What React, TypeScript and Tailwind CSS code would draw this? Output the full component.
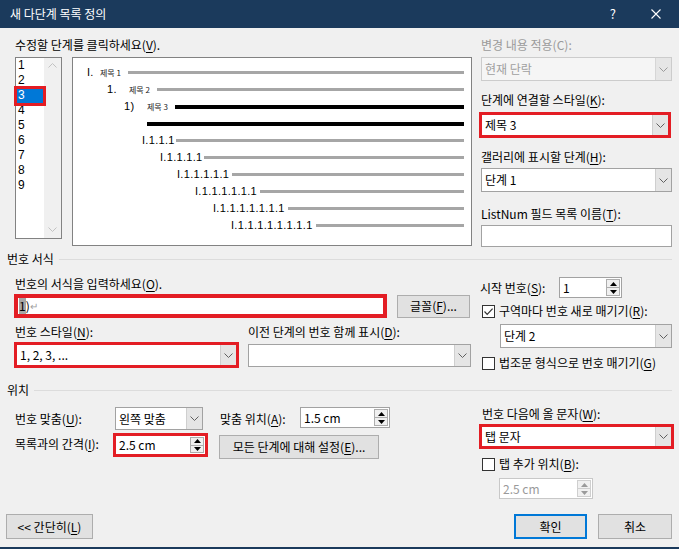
import type { ReactNode } from 'react';

const RED = 'border-[#e31d24]';

function U({ children }: { children: ReactNode }) {
  return <span className="underline underline-offset-[2px]">{children}</span>;
}

function Label({ children, className = '' }: { children: ReactNode; className?: string }) {
  return <div className={`text-[12px] leading-[16px] whitespace-nowrap ${className}`}>{children}</div>;
}

function Chevron({ up = false, color = '#606060' }: { up?: boolean; color?: string }) {
  return (
    <svg width="9" height="5" viewBox="0 0 9 5">
      <path d={up ? 'M0.5 4.5 L4.5 0.5 L8.5 4.5' : 'M0.5 0.5 L4.5 4.5 L8.5 0.5'} fill="none" stroke={color} strokeWidth="1" />
    </svg>
  );
}

function Tri({ up = false, color = '#000' }: { up?: boolean; color?: string }) {
  return (
    <svg width="7" height="4" viewBox="0 0 7 4">
      <path d={up ? 'M0 4 L3.5 0 L7 4 Z' : 'M0 0 L3.5 4 L7 0 Z'} fill={color} />
    </svg>
  );
}

interface FieldProps {
  value?: ReactNode;
  className?: string;
  red?: boolean;
  disabled?: boolean;
}

function Combo({ value, className = '', red = false, disabled = false }: FieldProps) {
  const border = red ? `border-[3px] ${RED}` : disabled ? 'border border-[#cccccc]' : 'border border-[#a2a2a2]';
  return (
    <div className={`flex items-stretch ${border} ${disabled ? 'bg-[#f5f5f5]' : 'bg-white'} ${className}`}>
      <div className={`flex-1 flex items-center pl-[3px] text-[12px] leading-[16px] whitespace-nowrap ${disabled ? 'text-[#a0a0a0]' : 'text-black'}`}>
        {value}
      </div>
      <div className={`w-[16px] flex items-center justify-center border-l ${disabled ? 'bg-[#e6e6e6] border-[#d6d6d6]' : 'bg-[#e5e5e5] border-[#cfcfcf]'}`}>
        <Chevron color={disabled ? '#9a9a9a' : '#606060'} />
      </div>
    </div>
  );
}

function Spin({ value, className = '', red = false, disabled = false }: FieldProps) {
  const border = red ? `border-[3px] ${RED}` : disabled ? 'border border-[#c8c8c8]' : 'border border-[#a2a2a2]';
  const tri = disabled ? '#9a9a9a' : '#000';
  return (
    <div className={`flex items-stretch bg-white ${border} ${className}`}>
      <div className={`flex-1 flex items-center pl-[3px] text-[12px] leading-[16px] whitespace-nowrap ${disabled ? 'text-[#9a9a9a]' : 'text-black'}`}>
        {value}
      </div>
      <div className="w-[15px] flex flex-col py-[1px] pr-[1px]">
        <div className={`flex-1 flex items-center justify-center bg-[#f0f0f0] border ${disabled ? 'border-[#cfcfcf]' : 'border-[#adadad]'}`}>
          <Tri up color={tri} />
        </div>
        <div className={`flex-1 flex items-center justify-center bg-[#f0f0f0] border border-t-0 ${disabled ? 'border-[#cfcfcf]' : 'border-[#adadad]'}`}>
          <Tri color={tri} />
        </div>
      </div>
    </div>
  );
}

function Check({ checked = false }: { checked?: boolean }) {
  return (
    <div className="w-[13px] h-[13px] border border-[#333333] bg-white flex items-center justify-center shrink-0">
      {checked && (
        <svg width="11" height="11" viewBox="0 0 11 11">
          <path d="M1.5 5.5 L4.2 8.3 L9.6 2.6" fill="none" stroke="#333" strokeWidth="1.2" />
        </svg>
      )}
    </div>
  );
}

function Btn({ children, className = '', primary = false }: { children: ReactNode; className?: string; primary?: boolean }) {
  return (
    <div
      className={`flex items-center justify-center bg-[#e1e1e1] text-[12px] leading-[16px] whitespace-nowrap ${
        primary ? 'border-2 border-[#0078d7]' : 'border border-[#adadad]'
      } ${className}`}
    >
      {children}
    </div>
  );
}

function Section({ title, className = '' }: { title: string; className?: string }) {
  return (
    <div className={`flex items-center mx-[7px] ${className}`}>
      <span className="text-[12px] leading-[16px]">{title}</span>
      <div className="flex-1 h-px bg-[#dcdcdc] ml-[5px]" />
    </div>
  );
}

function LevelList() {
  return (
    <div className="relative w-[47px] h-[182px] border border-[#828282] bg-white flex">
      <div className="flex-1 font-['Liberation_Sans',sans-serif]">
        {[1, 2, 3, 4, 5, 6, 7, 8, 9].map((n) => (
          <div
            key={n}
            className={`h-[15px] leading-[15px] text-[12px] ${n === 3 ? 'bg-[#0078d7] text-white mx-[1px] pl-[1px]' : 'pl-[2px]'}`}
          >
            {n}
          </div>
        ))}
      </div>
      <div className="w-[17px] bg-[#f0f0f0] flex flex-col justify-between items-center pt-[5px] pb-[6px]">
        <Chevron up color="#c2c2c2" />
        <Chevron color="#c2c2c2" />
      </div>
      <div className={`absolute left-[-2px] top-[28px] w-[32px] h-[20px] border-[3px] ${RED}`} />
    </div>
  );
}

const NUM = "font-['Liberation_Sans',sans-serif] text-[11px] leading-[17px] tracking-[0.3px] whitespace-nowrap text-black";
const TITLE = 'text-[8px] leading-[17px] whitespace-nowrap text-[#222]';
const GRAY_LINE = 'flex-1 h-[3px] bg-[#a6a6a6]';
const BLACK_LINE = 'flex-1 h-[4px] bg-black';

function Preview() {
  return (
    <div className="ml-[10px] w-[400px] h-[189px] border border-[#828282] bg-white pt-[6px] pr-[7px]">
      <div className="h-[17px] flex items-center pl-[14px]">
        <span className={`${NUM} w-[13px]`}>I.</span>
        <span className={`${TITLE} w-[28px]`}>제목 1</span>
        <div className={GRAY_LINE} />
      </div>
      <div className="h-[17px] flex items-center pl-[34px]">
        <span className={`${NUM} w-[22px]`}>1.</span>
        <span className={`${TITLE} w-[28px]`}>제목 2</span>
        <div className={GRAY_LINE} />
      </div>
      <div className="h-[17px] flex items-center pl-[51px]">
        <span className={`${NUM} w-[23px]`}>1)</span>
        <span className={`${TITLE} w-[28px]`}>제목 3</span>
        <div className={BLACK_LINE} />
      </div>
      <div className="h-[17px] flex items-center pl-[74px]">
        <div className={BLACK_LINE} />
      </div>
      <div className="h-[17px] flex items-center pl-[69px]">
        <span className={`${NUM} w-[34px]`}>I.1.1.1</span>
        <div className={GRAY_LINE} />
      </div>
      <div className="h-[17px] flex items-center pl-[87px]">
        <span className={`${NUM} w-[44px]`}>I.1.1.1.1</span>
        <div className={GRAY_LINE} />
      </div>
      <div className="h-[17px] flex items-center pl-[104px]">
        <span className={`${NUM} w-[55px]`}>I.1.1.1.1.1</span>
        <div className={GRAY_LINE} />
      </div>
      <div className="h-[17px] flex items-center pl-[122px]">
        <span className={`${NUM} w-[65px]`}>I.1.1.1.1.1.1</span>
        <div className={GRAY_LINE} />
      </div>
      <div className="h-[17px] flex items-center pl-[140px]">
        <span className={`${NUM} w-[75px]`}>I.1.1.1.1.1.1.1</span>
        <div className={GRAY_LINE} />
      </div>
      <div className="h-[17px] flex items-center pl-[158px]">
        <span className={`${NUM} w-[85px]`}>I.1.1.1.1.1.1.1.1</span>
        <div className={GRAY_LINE} />
      </div>
    </div>
  );
}

export default function App() {
  return (
    <div className="w-[679px] h-[549px] bg-[#f0f0f0] flex flex-col border-b-2 border-[#1b3a5c] overflow-hidden text-black font-['Noto_Sans_CJK_KR','Liberation_Sans',sans-serif]">
      {/* title bar */}
      <div className="h-[28px] shrink-0 bg-[#1b3a5c] flex items-center text-white">
        <span className="ml-[10px] text-[12px] leading-[16px]">새 다단계 목록 정의</span>
        <span className="ml-auto text-[13px] leading-[16px]">?</span>
        <svg className="ml-[35px] mr-[18px]" width="10" height="10" viewBox="0 0 10 10">
          <path d="M0.5 0.5 L9.5 9.5 M9.5 0.5 L0.5 9.5" stroke="#fff" strokeWidth="1.1" />
        </svg>
      </div>

      {/* level + preview */}
      <div className="flex pt-[9px]">
        <div className="ml-[15px] w-[457px]">
          <Label>
            수정할 단계를 클릭하세요(<U>V</U>).
          </Label>
          <div className="flex items-start mt-[4px]">
            <LevelList />
            <Preview />
          </div>
        </div>
        <div className="ml-[9px] w-[191px] flex flex-col">
          <Label className="text-[#9a9a9a]">변경 내용 적용(C):</Label>
          <Combo disabled className="mt-[4px] h-[24px]" value="현재 단락" />
          <Label className="mt-[11px]">
            단계에 연결할 스타일(<U>K</U>):
          </Label>
          <Combo red className="mt-[4px] h-[26px] -ml-[2px] w-[192px]" value="제목 3" />
          <Label className="mt-[11px]">
            갤러리에 표시할 단계(<U>H</U>):
          </Label>
          <Combo className="mt-[3px] h-[24px]" value="단계 1" />
          <Label className="mt-[14px]">
            ListNum 필드 목록 이름(<U>T</U>):
          </Label>
          <div className="mt-[3px] h-[22px] bg-white border border-[#a2a2a2]" />
        </div>
      </div>

      {/* number format */}
      <Section title="번호 서식" className="mt-[4px]" />
      <div className="flex">
        <div className="ml-[14px] w-[458px] flex flex-col">
          <Label className="ml-[1px] mt-[9px]">
            번호의 서식을 입력하세요(<U>O</U>).
          </Label>
          <div className="flex items-center mt-[2px]">
            <div className={`w-[373px] h-[24px] border-[4px] ${RED} bg-white flex items-center pl-[1px] text-[12px] leading-[16px]`}>
              <span className="bg-[#a6a6a6]">1</span>
              <span>)</span>
              <span className="text-[#a0a0a0] text-[10px]">↵</span>
            </div>
            <Btn className="ml-[10px] w-[73px] h-[23px]">
              글꼴(<U>F</U>)...
            </Btn>
          </div>
          <div className="flex mt-[6px]">
            <Label className="ml-[1px] w-[233px]">
              번호 스타일(<U>N</U>):
            </Label>
            <Label>
              이전 단계의 번호 함께 표시(<U>D</U>):
            </Label>
          </div>
          <div className="flex items-start mt-[2px]">
            <Combo red className="w-[225px] h-[26px]" value="1, 2, 3, ..." />
            <Combo className="ml-[9px] mt-[2px] w-[223px] h-[23px]" value="" />
          </div>
        </div>
        <div className="ml-[8px] w-[192px] flex flex-col">
          <div className="flex items-center mt-[10px]">
            <Label className="w-[79px]">
              시작 번호(<U>S</U>):
            </Label>
            <Spin className="w-[63px] h-[21px]" value="1" />
          </div>
          <div className="flex items-center mt-[5px] ml-[2px]">
            <Check checked />
            <Label className="ml-[4px]">
              구역마다 번호 새로 매기기(<U>R</U>):
            </Label>
          </div>
          <Combo className="ml-[20px] mt-[5px] h-[24px] w-[172px]" value="단계 2" />
          <div className="flex items-center mt-[7px] ml-[2px]">
            <Check />
            <Label className="ml-[4px]">
              법조문 형식으로 번호 매기기(<U>G</U>)
            </Label>
          </div>
        </div>
      </div>

      {/* position */}
      <Section title="위치" className="mt-[11px]" />
      <div className="flex">
        <div className="ml-[15px] w-[457px] flex flex-col">
          <div className="flex items-center mt-[9px]">
            <Label className="w-[100px]">
              번호 맞춤(<U>U</U>):
            </Label>
            <Combo className="w-[88px] h-[23px]" value="왼쪽 맞춤" />
            <Label className="ml-[17px] w-[80px]">
              맞춤 위치(<U>A</U>):
            </Label>
            <Spin className="w-[90px] h-[21px] self-start" value="1.5 cm" />
          </div>
          <div className="flex items-start mt-[3px]">
            <Label className="w-[98px] mt-[3px]">
              목록과의 간격(<U>I</U>):
            </Label>
            <Spin red className="w-[95px] h-[24px]" value="2.5 cm" />
            <Btn className="ml-[11px] mt-[2px] w-[160px] h-[24px]">
              모든 단계에 대해 설정(<U>E</U>)...
            </Btn>
          </div>
        </div>
        <div className="ml-[7px] w-[195px] flex flex-col">
          <Label className="ml-[3px] mt-[8px]">
            번호 다음에 올 문자(<U>W</U>):
          </Label>
          <Combo red className="mt-[2px] h-[25px]" value="탭 문자" />
          <div className="flex items-center mt-[7px] ml-[3px]">
            <Check />
            <Label className="ml-[4px]">
              탭 추가 위치(<U>B</U>):
            </Label>
          </div>
          <Spin disabled className="ml-[20px] mt-[6px] w-[94px] h-[21px]" value="2.5 cm" />
        </div>
      </div>

      {/* footer buttons */}
      <div className="mt-auto mb-[8px] flex items-center">
        <Btn className="ml-[6px] w-[87px] h-[25px]">
          &lt;&lt; 간단히(<U>L</U>)
        </Btn>
        <Btn primary className="ml-auto w-[73px] h-[25px]">
          확인
        </Btn>
        <Btn className="ml-[11px] mr-[7px] w-[74px] h-[25px]">취소</Btn>
      </div>
    </div>
  );
}
